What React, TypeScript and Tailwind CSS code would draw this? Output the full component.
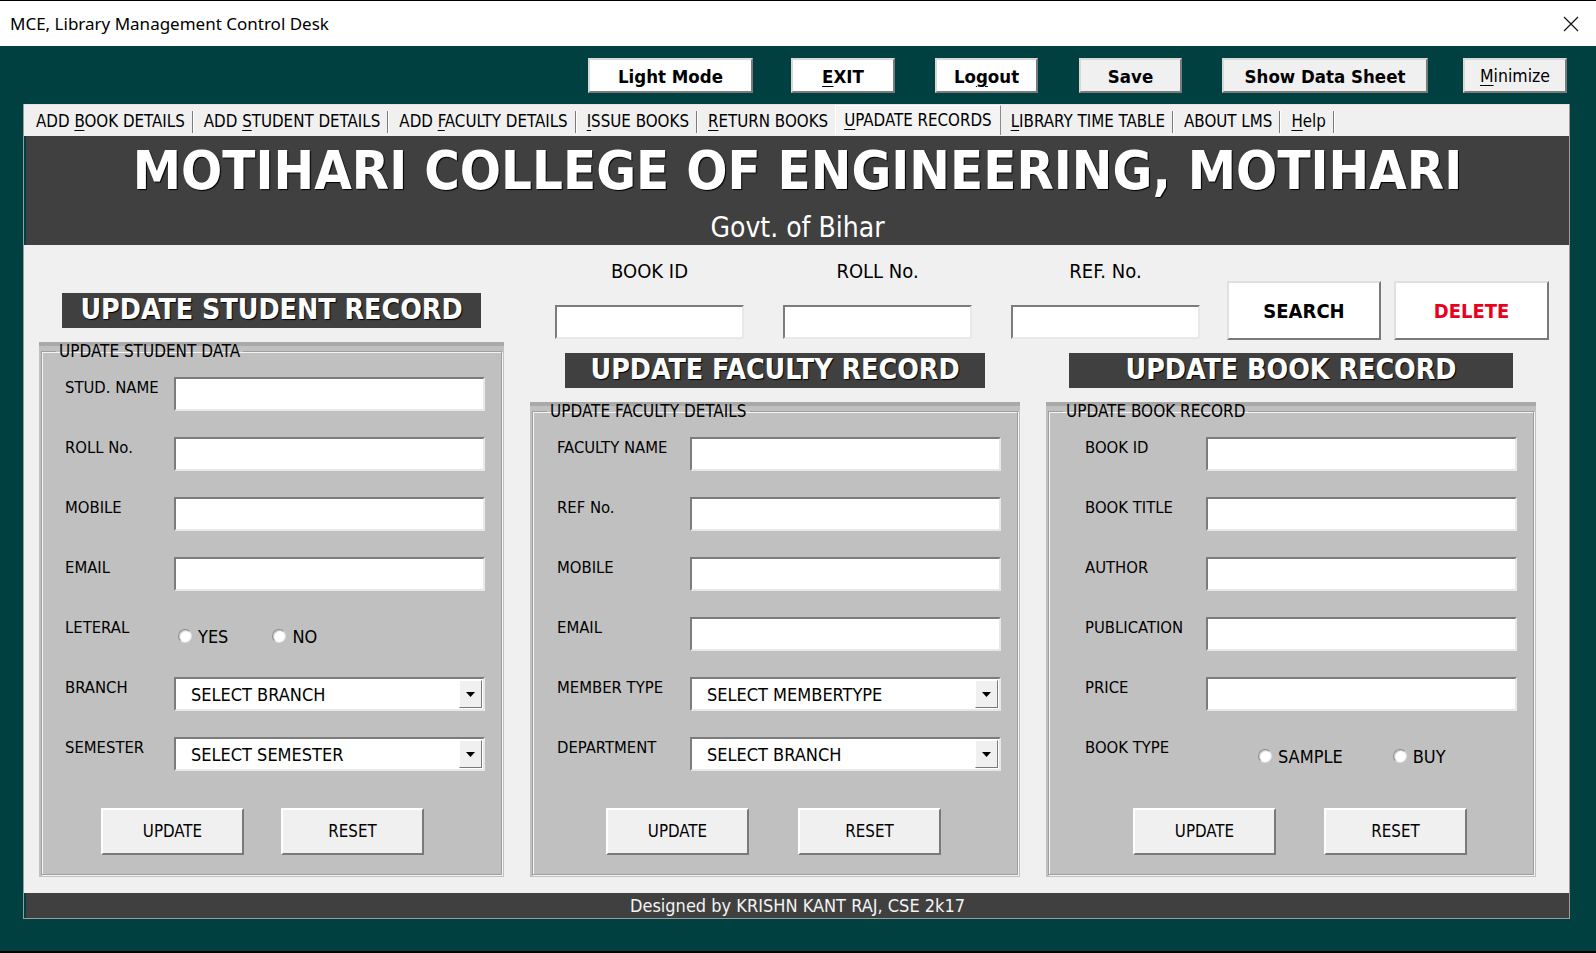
import React from "react";

const ui = "font-['DejaVu_Sans_Condensed','DejaVu_Sans',sans-serif]";

function U({ children }: { children: React.ReactNode }) {
  return <span className="underline underline-offset-[3px] decoration-1">{children}</span>;
}

function TopButton({
  children,
  className,
}: {
  children: React.ReactNode;
  className: string;
}) {
  return (
    <button
      className={`h-[35px] pt-[3px] border-2 border-t-[#d8d8d8] border-l-[#d8d8d8] border-b-[#7a7a7a] border-r-[#7a7a7a] text-black leading-none ${className}`}
    >
      {children}
    </button>
  );
}

function TextBox({ className = "w-[311px]" }: { className?: string }) {
  return (
    <input
      type="text"
      className={`h-[34px] bg-white border-2 border-t-[#7c7c7c] border-l-[#7c7c7c] border-b-[#e8e8e8] border-r-[#e8e8e8] outline-none ${className}`}
    />
  );
}

function Combo({ text }: { text: string }) {
  return (
    <div className="w-[311px] h-[34px] bg-white border-2 border-t-[#7c7c7c] border-l-[#7c7c7c] border-b-[#e8e8e8] border-r-[#e8e8e8] flex items-center">
      <span className="flex-1 pl-[15px] text-[18px] text-black">{text}</span>
      <span className="w-[23px] h-[28px] mr-[1px] bg-[#f0f0f0] border border-t-white border-l-white border-b-[#7a7a7a] border-r-[#7a7a7a] flex items-center justify-center">
        <svg width="9" height="5" viewBox="0 0 9 5">
          <path d="M0 0h9L4.5 5z" fill="#000" />
        </svg>
      </span>
    </div>
  );
}

function Radio({ label }: { label: string }) {
  return (
    <label className="flex items-center gap-[6px] text-[18px] text-black">
      <span className="w-[14px] h-[14px] shrink-0 rounded-full bg-white border border-t-[#8c8c8c] border-l-[#8c8c8c] border-b-[#dcdcdc] border-r-[#dcdcdc] shadow-[inset_1px_1px_1px_#c4c4c4]" />
      {label}
    </label>
  );
}

function SectionLabel({ text, w }: { text: string; w: string }) {
  return (
    <div
      className={`${w} h-[35px] bg-[#404040] flex items-center justify-center text-white font-bold text-[28.3px] leading-none [text-shadow:1px_1px_1px_#000]`}
    >
      {text}
    </div>
  );
}

function ActionButton({ text }: { text: string }) {
  return (
    <button className="w-[143px] h-[47px] bg-[#f0f0f0] border-2 border-t-white border-l-white border-b-[#7a7a7a] border-r-[#7a7a7a] text-[16.8px] text-black">
      {text}
    </button>
  );
}

function GroupBox({
  legend,
  className,
  children,
}: {
  legend: string;
  className: string;
  children: React.ReactNode;
}) {
  return (
    <div
      className={`bg-[#c0c0c0] border-t-4 border-t-[#a9a9a9] px-[2px] pb-[2px] flex flex-col ${className}`}
    >
      <fieldset className="-mt-[3px] flex-1 border border-[#9f9f9f] shadow-[inset_1px_1px_0_#f4f4f4,1px_1px_0_#f4f4f4]">
        <legend className="ml-[14px] px-[3px] text-[17px] leading-[16px] text-black">
          {legend}
        </legend>
        {children}
      </fieldset>
    </div>
  );
}

function Row({
  label,
  labelW,
  children,
}: {
  label: string;
  labelW: string;
  children: React.ReactNode;
}) {
  return (
    <div className="flex items-start h-[34px]">
      <span className={`${labelW} shrink-0 text-[16.5px] leading-[20px] text-black pt-[1px]`}>
        {label}
      </span>
      {children}
    </div>
  );
}

const tabs = [
  { pre: "ADD ", u: "B", post: "OOK DETAILS" },
  { pre: "ADD ", u: "S", post: "TUDENT DETAILS" },
  { pre: "ADD ", u: "F", post: "ACULTY DETAILS" },
  { pre: "", u: "I", post: "SSUE BOOKS" },
  { pre: "", u: "R", post: "ETURN BOOKS" },
  { pre: "", u: "U", post: "PADATE RECORDS", active: true },
  { pre: "", u: "L", post: "IBRARY TIME TABLE" },
  { pre: "ABOUT LMS", u: "", post: "" },
  { pre: "", u: "H", post: "elp" },
];

export default function App() {
  return (
    <div className={`w-[1596px] h-[953px] bg-[#004040] flex flex-col overflow-hidden ${ui}`}>
      {/* title bar */}
      <div className="h-[46px] shrink-0 bg-white border-t border-black flex items-center justify-between pl-[10px] pr-[17px]">
        <span className="font-['Noto_Sans',sans-serif] text-[17px] text-black">
          MCE, Library Management Control Desk
        </span>
        <svg width="16" height="16" viewBox="0 0 16 16">
          <path d="M1 1L15 15M15 1L1 15" stroke="#111" strokeWidth="1.2" />
        </svg>
      </div>

      {/* top buttons */}
      <div className="h-[35px] mt-[12px] shrink-0 flex pl-[588px]">
        <TopButton className="w-[165px] bg-white font-bold text-[18.5px]">Light Mode</TopButton>
        <TopButton className="w-[104px] ml-[38px] bg-white font-bold text-[18.5px]">
          <U>E</U>XIT
        </TopButton>
        <TopButton className="w-[103px] ml-[40px] bg-white font-bold text-[18.5px]">
          Lo<U>g</U>out
        </TopButton>
        <TopButton className="w-[103px] ml-[41px] bg-[#f0f0f0] font-bold text-[18.5px]">
          Save
        </TopButton>
        <TopButton className="w-[206px] ml-[40px] bg-[#f0f0f0] font-bold text-[18.5px]">
          Show Data Sheet
        </TopButton>
        <TopButton className="w-[104px] ml-[35px] bg-[#f0f0f0] text-[17.5px]">
          <U>M</U>inimize
        </TopButton>
      </div>

      {/* main frame */}
      <div className="mt-[11px] ml-[23px] w-[1547px] shrink-0 border-x border-b border-[#9c9c9c] flex flex-col">
        {/* tab strip */}
        <div className="h-[32px] bg-[#f0f0f0] border-t border-[#e4e4e4] flex items-end pl-[2px]">
          {tabs.map((t, i) => {
            const label = (
              <>
                {t.pre}
                {t.u && <U>{t.u}</U>}
                {t.post}
              </>
            );
            if (t.active) {
              return (
                <div
                  key={i}
                  className="h-[30px] mb-[1px] px-[8px] bg-[#f4f4f4] border-t border-l border-t-white border-l-white border-r border-r-[#8a8a8a] flex items-start pt-[2px] text-[16.8px] text-black"
                >
                  {label}
                </div>
              );
            }
            const next = tabs[i + 1];
            return (
              <div key={i} className="h-[28px] flex items-center text-[16.8px] text-black">
                <span className="pl-[10px] pr-[7px]">{label}</span>
                {!(next && next.active) && (
                  <span className="w-[2px] h-[22px] border-l border-[#7a7a7a] bg-white" />
                )}
              </div>
            );
          })}
        </div>

        {/* header */}
        <div className="h-[109px] bg-[#404040] ml-[2px] flex flex-col items-center text-white">
          <div className="mt-[4px] text-[54px] font-bold leading-[62px] [text-shadow:1px_1px_1px_#000]">
            MOTIHARI COLLEGE OF ENGINEERING, MOTIHARI
          </div>
          <div className="mt-[9px] text-[28px] leading-[34px]">Govt. of Bihar</div>
        </div>

        {/* content */}
        <div className="h-[648px] bg-[#f0f0f0] flex pl-[15px]">
          {/* student */}
          <div className="w-[465px] flex flex-col items-center pt-[48px]">
            <SectionLabel text="UPDATE STUDENT RECORD" w="w-[419px]" />
            <GroupBox legend="UPDATE STUDENT DATA" className="mt-[14px] h-[535px] w-full">
              <div className="pl-[23px] pt-[18px] flex flex-col gap-[26px]">
                <Row label="STUD. NAME" labelW="w-[109px]">
                  <TextBox />
                </Row>
                <Row label="ROLL No." labelW="w-[109px]">
                  <TextBox />
                </Row>
                <Row label="MOBILE" labelW="w-[109px]">
                  <TextBox />
                </Row>
                <Row label="EMAIL" labelW="w-[109px]">
                  <TextBox />
                </Row>
                <Row label="LETERAL" labelW="w-[109px]">
                  <div className="h-[34px] flex items-center pl-[4px] pt-[4px]">
                    <Radio label="YES" />
                    <div className="ml-[44px]">
                      <Radio label="NO" />
                    </div>
                  </div>
                </Row>
                <Row label="BRANCH" labelW="w-[109px]">
                  <Combo text="SELECT BRANCH" />
                </Row>
                <Row label="SEMESTER" labelW="w-[109px]">
                  <Combo text="SELECT SEMESTER" />
                </Row>
              </div>
              <div className="flex gap-[37px] ml-[59px] mt-[37px]">
                <ActionButton text="UPDATE" />
                <ActionButton text="RESET" />
              </div>
            </GroupBox>
          </div>

          {/* right side */}
          <div className="ml-[26px] w-[1019px] flex flex-col">
            {/* search row */}
            <div className="h-[95px] flex items-end">
              {["BOOK ID", "ROLL No.", "REF. No."].map((l, i) => (
                <div
                  key={l}
                  className={`w-[189px] flex flex-col items-center mb-[1px] ${i === 0 ? "ml-[25px]" : "ml-[39px]"}`}
                >
                  <span className="text-[20px] leading-[24px] text-black">{l}</span>
                  <TextBox className="w-[189px] mt-[22px]" />
                </div>
              ))}
              <button className="ml-[27px] w-[154px] h-[59px] bg-white border-2 border-t-[#e0e0e0] border-l-[#e0e0e0] border-b-[#7a7a7a] border-r-[#7a7a7a] text-[20px] font-bold text-black">
                SEARCH
              </button>
              <button className="ml-[13px] w-[155px] h-[59px] bg-white border-2 border-t-[#e0e0e0] border-l-[#e0e0e0] border-b-[#7a7a7a] border-r-[#7a7a7a] text-[20px] font-bold text-[#e8001c]">
                DELETE
              </button>
            </div>

            <div className="mt-[13px] flex gap-[26px]">
              {/* faculty */}
              <div className="w-[490px] flex flex-col items-center">
                <SectionLabel text="UPDATE FACULTY RECORD" w="w-[420px]" />
                <GroupBox legend="UPDATE FACULTY DETAILS" className="mt-[14px] h-[475px] w-full">
                  <div className="pl-[24px] pt-[18px] flex flex-col gap-[26px]">
                    <Row label="FACULTY NAME" labelW="w-[133px]">
                      <TextBox />
                    </Row>
                    <Row label="REF No." labelW="w-[133px]">
                      <TextBox />
                    </Row>
                    <Row label="MOBILE" labelW="w-[133px]">
                      <TextBox />
                    </Row>
                    <Row label="EMAIL" labelW="w-[133px]">
                      <TextBox />
                    </Row>
                    <Row label="MEMBER TYPE" labelW="w-[133px]">
                      <Combo text="SELECT MEMBERTYPE" />
                    </Row>
                    <Row label="DEPARTMENT" labelW="w-[133px]">
                      <Combo text="SELECT BRANCH" />
                    </Row>
                  </div>
                  <div className="flex gap-[49px] ml-[73px] mt-[37px]">
                    <ActionButton text="UPDATE" />
                    <ActionButton text="RESET" />
                  </div>
                </GroupBox>
              </div>

              {/* book */}
              <div className="w-[490px] flex flex-col items-center">
                <SectionLabel text="UPDATE BOOK RECORD" w="w-[444px]" />
                <GroupBox legend="UPDATE BOOK RECORD" className="mt-[14px] h-[475px] w-full">
                  <div className="pl-[36px] pt-[18px] flex flex-col gap-[26px]">
                    <Row label="BOOK ID" labelW="w-[121px]">
                      <TextBox />
                    </Row>
                    <Row label="BOOK TITLE" labelW="w-[121px]">
                      <TextBox />
                    </Row>
                    <Row label="AUTHOR" labelW="w-[121px]">
                      <TextBox />
                    </Row>
                    <Row label="PUBLICATION" labelW="w-[121px]">
                      <TextBox />
                    </Row>
                    <Row label="PRICE" labelW="w-[121px]">
                      <TextBox />
                    </Row>
                    <Row label="BOOK TYPE" labelW="w-[121px]">
                      <div className="h-[34px] flex items-center pl-[52px] pt-[4px]">
                        <Radio label="SAMPLE" />
                        <div className="ml-[50px]">
                          <Radio label="BUY" />
                        </div>
                      </div>
                    </Row>
                  </div>
                  <div className="flex gap-[48px] ml-[84px] mt-[37px]">
                    <ActionButton text="UPDATE" />
                    <ActionButton text="RESET" />
                  </div>
                </GroupBox>
              </div>
            </div>
          </div>
        </div>

        {/* footer */}
        <div className="h-[25px] bg-[#404040] ml-[2px] flex items-center justify-center text-[18px] text-[#f4f4f4]">
          Designed by KRISHN KANT RAJ, CSE 2k17
        </div>
      </div>

      <div className="flex-1" />
      <div className="h-[2px] bg-black shrink-0" />
    </div>
  );
}
